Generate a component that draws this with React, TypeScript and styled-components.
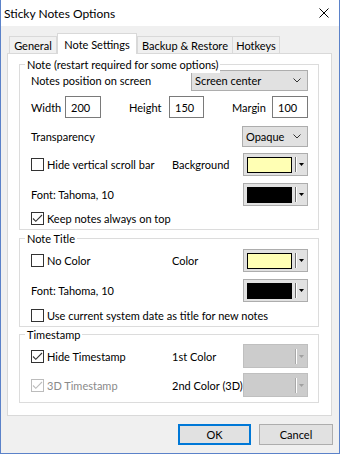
import React from "react";
import styled, { createGlobalStyle } from "styled-components";

const Global = createGlobalStyle`
  html, body { margin: 0; padding: 0; background: #ffffff; }
  body { font-family: Lato, "Noto Sans", sans-serif; font-size: 11px; color: #000; }
  * { box-sizing: border-box; }
`;

const Window = styled.div`
  width: 340px;
  height: 454px;
  border: 1px solid #5b82c9;
  border-top: none;
  background: #f0f0f0;
  display: flex;
  flex-direction: column;
`;

const TitleBar = styled.div`
  height: 26px;
  flex: none;
  background: #ffffff;
  display: flex;
  align-items: center;
  justify-content: space-between;
  padding: 0 10px 0 3px;
`;

const Title = styled.span`
  font-size: 12px;
`;

const Body = styled.div`
  flex: 1;
  display: flex;
  flex-direction: column;
  padding: 7px 7px 0 6px;
`;

const TabRow = styled.div`
  height: 20px;
  display: flex;
  align-items: flex-end;
  padding-left: 2px;
`;

const Tab = styled.div<{ $w: number; $active?: boolean; $ml?: number }>`
  width: ${(p) => p.$w}px;
  height: ${(p) => (p.$active ? 21 : 17)}px;
  margin-bottom: ${(p) => (p.$active ? -1 : 0)}px;
  margin-left: ${(p) => p.$ml ?? 0}px;
  position: relative;
  z-index: ${(p) => (p.$active ? 1 : 0)};
  border: 1px solid #d9d9d9;
  border-bottom: none;
  background: ${(p) => (p.$active ? "#ffffff" : "#f0f0f0")};
  display: flex;
  align-items: center;
  justify-content: center;
  white-space: nowrap;
`;

const Panel = styled.div`
  height: 363px;
  flex: none;
  background: #ffffff;
  border: 1px solid #d9d9d9;
  padding: 10px 12px 0 11px;
  display: flex;
  flex-direction: column;
`;

const Group = styled.div<{ $mt?: number; $pt: number; $pb: number }>`
  position: relative;
  border: 1px solid #dcdcdc;
  margin-top: ${(p) => p.$mt ?? 0}px;
  padding: ${(p) => p.$pt}px 10px ${(p) => p.$pb}px 11px;
  display: flex;
  flex-direction: column;
`;

const Legend = styled.span`
  position: absolute;
  top: -8px;
  left: 5px;
  padding: 0 2px;
  line-height: 16px;
  background: #ffffff;
  white-space: nowrap;
`;

const Row = styled.div<{ $h: number; $mt?: number }>`
  display: flex;
  align-items: center;
  height: ${(p) => p.$h}px;
  margin-top: ${(p) => p.$mt ?? 0}px;
  white-space: nowrap;
`;

const Label = styled.span<{ $w?: number; $ml?: number; $disabled?: boolean }>`
  flex: none;
  width: ${(p) => (p.$w ? `${p.$w}px` : "auto")};
  margin-left: ${(p) => p.$ml ?? 0}px;
  color: ${(p) => (p.$disabled ? "#8a8a8a" : "#000")};
`;

const LeftCell = styled.div`
  width: 141px;
  flex: none;
  display: flex;
  align-items: center;
`;

const CheckWrap = styled.label`
  display: flex;
  align-items: center;
  gap: 3px;
`;

const Box = styled.span<{ $disabled?: boolean }>`
  width: 13px;
  height: 13px;
  flex: none;
  border: 1px solid ${(p) => (p.$disabled ? "#bcbcbc" : "#333333")};
  background: #ffffff;
  display: flex;
  align-items: center;
  justify-content: center;
`;

const Select = styled.div<{ $w: number }>`
  width: ${(p) => p.$w}px;
  height: 21px;
  margin-left: auto;
  background: #e1e1e1;
  border: 1px solid #adadad;
  display: flex;
  align-items: center;
  justify-content: space-between;
  padding: 0 6px 0 3px;
`;

const NumInput = styled.input<{ $w: number; $ml?: number }>`
  width: ${(p) => p.$w}px;
  height: 22px;
  margin: 0 0 0 ${(p) => p.$ml ?? 0}px;
  flex: none;
  border: 1px solid #7a7a7a;
  background: #ffffff;
  padding: 0 0 0 5px;
  font: inherit;
  color: #000;
  outline: none;
`;

const ColorBtn = styled.div<{ $disabled?: boolean }>`
  width: 65px;
  height: 100%;
  margin-left: auto;
  flex: none;
  background: ${(p) => (p.$disabled ? "#cccccc" : "#e1e1e1")};
  border: 1px solid ${(p) => (p.$disabled ? "#bfbfbf" : "#adadad")};
  display: flex;
  align-items: center;
  padding-left: 3px;
`;

const Swatch = styled.span<{ $color?: string }>`
  width: 45px;
  height: 16px;
  flex: none;
  border: 1px solid ${(p) => (p.$color ? "#000" : "transparent")};
  background: ${(p) => p.$color ?? "transparent"};
`;

const Sep = styled.span<{ $disabled?: boolean }>`
  width: 1px;
  height: 15px;
  margin-left: 3px;
  flex: none;
  background: ${(p) => (p.$disabled ? "#a8a8a8" : "#6d6d6d")};
  box-shadow: 1px 0 0 #ffffff;
`;

const ArrowSvg = styled.svg`
  margin-left: 3px;
  flex: none;
`;

const ButtonRow = styled.div`
  display: flex;
  justify-content: flex-end;
  gap: 8px;
  margin-top: 8px;
  margin-right: -1px;
`;

const Button = styled.button<{ $w: number; $default?: boolean }>`
  width: ${(p) => p.$w}px;
  height: 21px;
  padding: 0;
  font: inherit;
  color: #000;
  background: #e1e1e1;
  border: ${(p) => (p.$default ? "2px solid #0078d7" : "1px solid #adadad")};
`;

const Check = ({ on, disabled }: { on?: boolean; disabled?: boolean }) => (
  <Box $disabled={disabled}>
    {on && (
      <svg width="11" height="11" viewBox="0 0 11 11">
        <polyline
          points="1,5.5 3.8,8.3 10,2"
          fill="none"
          stroke={disabled ? "#bcbcbc" : "#333"}
          strokeWidth="1.1"
        />
      </svg>
    )}
  </Box>
);

const CheckBox = ({
  on,
  disabled,
  children,
}: {
  on?: boolean;
  disabled?: boolean;
  children: React.ReactNode;
}) => (
  <CheckWrap>
    <Check on={on} disabled={disabled} />
    <Label $disabled={disabled}>{children}</Label>
  </CheckWrap>
);

const Chevron = () => (
  <svg width="8" height="5" viewBox="0 0 8 5">
    <polyline points="0.5,0.5 4,4 7.5,0.5" fill="none" stroke="#333" strokeWidth="1" />
  </svg>
);

const ColorPicker = ({ color, disabled }: { color?: string; disabled?: boolean }) => (
  <ColorBtn $disabled={disabled}>
    <Swatch $color={color} />
    <Sep $disabled={disabled} />
    <ArrowSvg width="5" height="3" viewBox="0 0 5 3">
      <polygon points="0,0 5,0 2.5,3" fill={disabled ? "#a0a0a0" : "#000"} />
    </ArrowSvg>
  </ColorBtn>
);

const CloseIcon = () => (
  <svg width="10" height="10" viewBox="0 0 10 10">
    <path d="M0.5 0.5 L9.5 9.5 M9.5 0.5 L0.5 9.5" stroke="#000" strokeWidth="1" fill="none" />
  </svg>
);

export default function App() {
  return (
    <>
      <Global />
      <Window>
        <TitleBar>
          <Title>Sticky Notes Options</Title>
          <CloseIcon />
        </TitleBar>
        <Body>
          <TabRow>
            <Tab $w={48}>General</Tab>
            <Tab $w={80} $active>
              Note Settings
            </Tab>
            <Tab $w={96}>Backup &amp; Restore</Tab>
            <Tab $w={48} $ml={-1}>
              Hotkeys
            </Tab>
          </TabRow>
          <Panel>
            <Group $pt={5} $pb={3}>
              <Legend>Note (restart required for some options)</Legend>
              <Row $h={21}>
                <Label>Notes position on screen</Label>
                <Select $w={117}>
                  <span>Screen center</span>
                  <Chevron />
                </Select>
              </Row>
              <Row $h={22} $mt={5}>
                <Label $w={34}>Width</Label>
                <NumInput $w={36} defaultValue="200" readOnly />
                <Label $w={40} $ml={28}>
                  Height
                </Label>
                <NumInput $w={35} defaultValue="150" readOnly />
                <Label $w={40} $ml={28}>
                  Margin
                </Label>
                <NumInput $w={36} defaultValue="100" readOnly />
              </Row>
              <Row $h={21} $mt={8}>
                <Label>Transparency</Label>
                <Select $w={66}>
                  <span>Opaque</span>
                  <Chevron />
                </Select>
              </Row>
              <Row $h={23} $mt={6}>
                <LeftCell>
                  <CheckBox>Hide vertical scroll bar</CheckBox>
                </LeftCell>
                <Label>Background</Label>
                <ColorPicker color="#ffffb4" />
              </Row>
              <Row $h={23} $mt={7}>
                <Label>Font: Tahoma, 10</Label>
                <ColorPicker color="#000000" />
              </Row>
              <Row $h={16} $mt={4}>
                <CheckBox on>Keep notes always on top</CheckBox>
              </Row>
            </Group>

            <Group $mt={8} $pt={10} $pb={3}>
              <Legend>Note Title</Legend>
              <Row $h={23}>
                <LeftCell>
                  <CheckBox>No Color</CheckBox>
                </LeftCell>
                <Label>Color</Label>
                <ColorPicker color="#ffffb4" />
              </Row>
              <Row $h={23} $mt={7}>
                <Label>Font: Tahoma, 10</Label>
                <ColorPicker color="#000000" />
              </Row>
              <Row $h={16} $mt={5}>
                <CheckBox>Use current system date as title for new notes</CheckBox>
              </Row>
            </Group>

            <Group $mt={7} $pt={9} $pb={5}>
              <Legend>Timestamp</Legend>
              <Row $h={24}>
                <LeftCell>
                  <CheckBox on>Hide Timestamp</CheckBox>
                </LeftCell>
                <Label>1st Color</Label>
                <ColorPicker disabled />
              </Row>
              <Row $h={24} $mt={5}>
                <LeftCell>
                  <CheckBox on disabled>
                    3D Timestamp
                  </CheckBox>
                </LeftCell>
                <Label>2nd Color (3D)</Label>
                <ColorPicker disabled />
              </Row>
            </Group>
          </Panel>
          <ButtonRow>
            <Button $w={73} $default>
              OK
            </Button>
            <Button $w={74}>Cancel</Button>
          </ButtonRow>
        </Body>
      </Window>
    </>
  );
}
